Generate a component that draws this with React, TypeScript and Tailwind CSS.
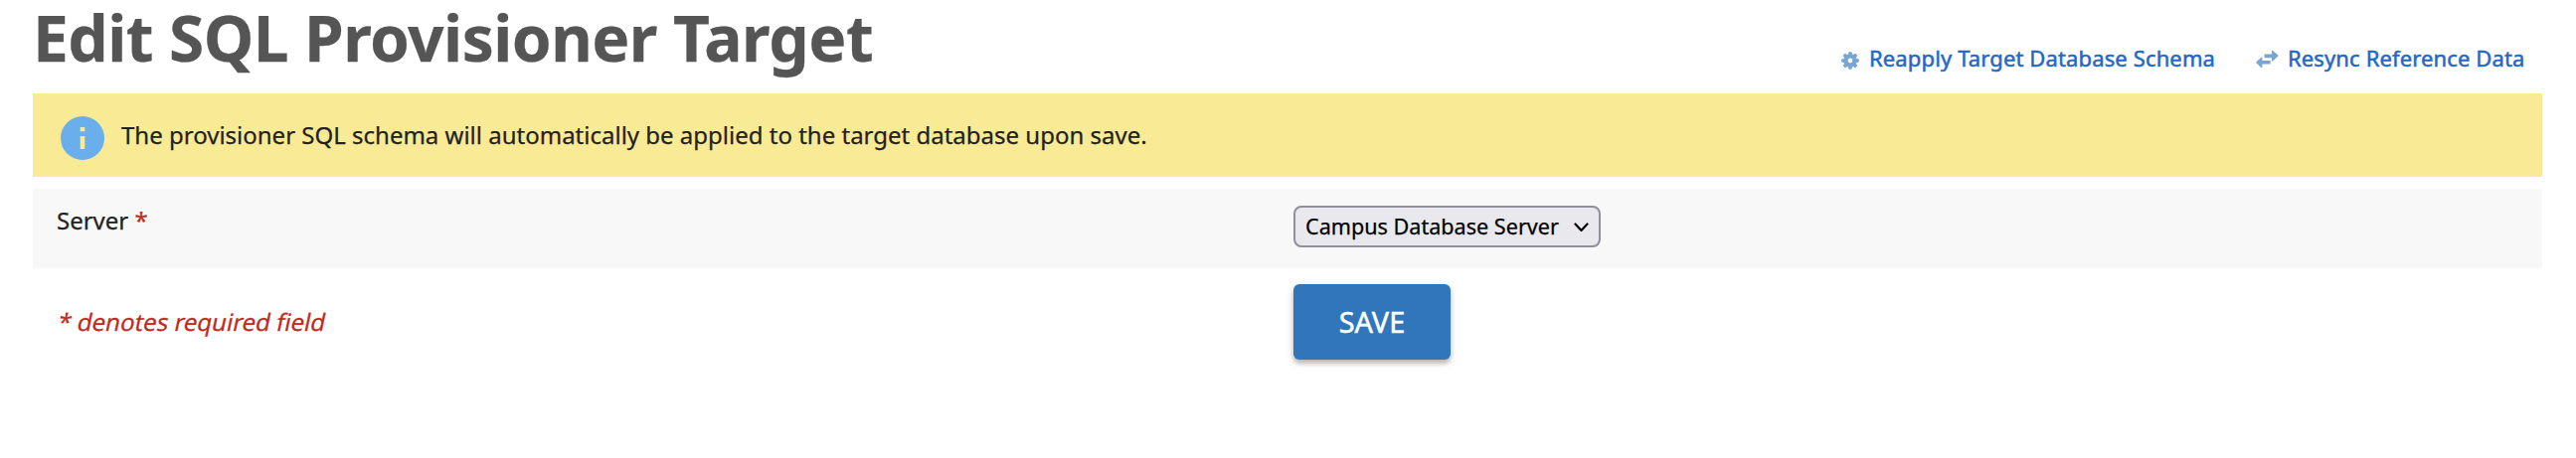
function GearIcon() {
  const teeth = [0, 45, 90, 135, 180, 225, 270, 315];
  return (
    <svg className="mt-[3px] h-[18px] w-[18px] shrink-0" viewBox="0 0 18 18" fill="#78a5d1">
      {teeth.map((angle) => (
        <rect key={angle} x="7.2" y="0.2" width="3.6" height="5" rx="0.7" transform={`rotate(${angle} 9 9)`} />
      ))}
      <path fillRule="evenodd" d="M9 2.2a6.8 6.8 0 1 0 0 13.6a6.8 6.8 0 0 0 0-13.6zM9 6.6a2.4 2.4 0 1 1 0 4.8a2.4 2.4 0 0 1 0-4.8z" />
    </svg>
  );
}

function SyncIcon() {
  return (
    <svg className="mt-[1px] h-[19px] w-[23px] shrink-0" viewBox="0 0 23 19" fill="#78a5d1">
      <path d="M8.6 4.4H16V1.2Q16 0 17 .9L22 5.2Q22.9 6 22 6.8L17 11.4Q16 12.2 16 11V8.2H8.6Z" />
      <path d="M14.6 10.9H6.4V8.2Q6.4 6.8 5.4 7.7L.7 12Q-.1 12.8.7 13.6L5.4 18.1Q6.4 19 6.4 17.8V14.6H14.6Z" />
    </svg>
  );
}

function InfoIcon() {
  return (
    <svg className="h-11 w-11 shrink-0" viewBox="0 0 44 44">
      <circle cx="22" cy="22" r="22" fill="#6aaeec" />
      <path fill="#f9ea96" d="M19.7 11h4.6v4.3h-4.6zM19.7 20h4.6v13h-4.6z" />
    </svg>
  );
}

export default function App() {
  return (
    <main className="h-[461px] w-[2591px] overflow-hidden bg-white pr-[34px] pl-[33px] font-['Noto_Sans',sans-serif] text-2xl text-[#222222] [-webkit-text-stroke:0.25px]">
      <header className="flex h-[94px] items-start justify-between">
        <h1 className="text-[64px] leading-[75px] font-bold tracking-[-0.57px] whitespace-nowrap text-[#555555]">Edit SQL Provisioner Target</h1>
        <nav className="flex pt-[49px] pr-[19px] text-[22px] leading-[18px] tracking-[0.13px] whitespace-nowrap text-[#2467c6] [-webkit-text-stroke:0.5px]">
          <a href="#schema" className="mr-[41px] flex items-start">
            <GearIcon />
            <span className="ml-[10px] w-[348px]">Reapply Target Database Schema</span>
          </a>
          <a href="#resync" className="flex items-start">
            <SyncIcon />
            <span className="ml-[9px] w-[237px]">Resync Reference Data</span>
          </a>
        </nav>
      </header>
      <section className="flex h-[84px] items-start bg-[#f9ea96] pt-[23px] pl-7">
        <InfoIcon />
        <p className="ml-[17px] leading-[37px] whitespace-nowrap">The provisioner SQL schema will automatically be applied to the target database upon save.</p>
      </section>
      <form onSubmit={(e) => e.preventDefault()}>
        <div className="mt-3 grid h-20 grid-cols-[1268px_1fr] items-start bg-[#f8f8f8]">
          <label htmlFor="server" className="pt-[13px] pl-6 leading-[37px]">
            Server <span className="text-[#bf2a1c]">*</span>
          </label>
          <div className="relative mt-[17px] h-[42px] w-[309px]">
            <select
              id="server"
              className="h-full w-full appearance-none rounded-lg border-2 border-[#8f8f9d] bg-[#e9e9ed] pl-[10px] text-[21.6px] leading-[38px] text-black"
            >
              <option>Campus Database Server</option>
            </select>
            <svg className="pointer-events-none absolute top-[17px] right-[12px] h-[10px] w-[15px]" viewBox="0 0 15 10" fill="none" stroke="#000" strokeWidth="2.2" strokeLinecap="round" strokeLinejoin="round">
              <path d="M1.5 1.5l6 6.5l6-6.5" />
            </svg>
          </div>
        </div>
        <div className="grid grid-cols-[1268px_1fr] items-start">
          <p className="pt-[36px] pl-[26px] leading-9 text-[#bf2a1c]">
            <span className="inline-block -skew-x-12">* denotes required field</span>
          </p>
          <button className="mt-4 h-[76px] w-[158px] rounded-md bg-[#3175bb] text-[28.8px] leading-[76px] text-white shadow-[0_4px_4px_rgba(0,0,0,0.2),0_2px_10px_rgba(0,0,0,0.14)] [-webkit-text-stroke:0.5px]">
            SAVE
          </button>
        </div>
      </form>
    </main>
  );
}
